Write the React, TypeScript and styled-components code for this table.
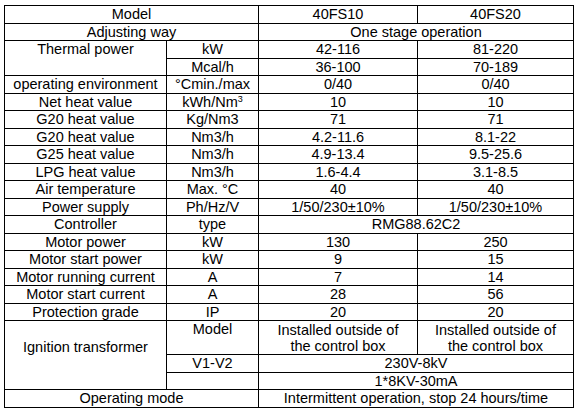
import React from "react";
import styled, { createGlobalStyle } from "styled-components";

const GlobalStyle = createGlobalStyle`
  html, body {
    margin: 0;
    padding: 0;
    background: #ffffff;
  }
`;

const Page = styled.div`
  padding: 5px 0 0 4px;
  background: #ffffff;
`;

const SpecTable = styled.table`
  border-collapse: collapse;
  table-layout: fixed;
  width: 569px;
  font-family: "Liberation Sans", Arial, sans-serif;
  font-size: 14.5px;
  color: #000;
`;

const Col = styled.col<{ $w: number }>`
  width: ${(p) => p.$w}px;
`;

const TableRow = styled.tr<{ $tall?: boolean }>`
  height: ${(p) => (p.$tall ? "34px" : "17.5px")};
`;

const Cell = styled.td<{ $top?: boolean; $lift?: boolean }>`
  border: 1px solid #000;
  padding: 0 0 ${(p) => (p.$lift ? "16px" : "0")};
  text-align: center;
  vertical-align: ${(p) => (p.$top ? "top" : "middle")};
  line-height: 16px;
  white-space: nowrap;
`;

const Sup = styled.sup`
  font-size: 9px;
  line-height: 0;
  vertical-align: 5px;
`;

type CellData = {
  text?: React.ReactNode;
  colSpan?: number;
  rowSpan?: number;
  top?: boolean;
  lift?: boolean;
};
type Row = { cells: CellData[]; tall?: boolean };

const colWidths = [162, 92, 159, 156];

const rows: Row[] = [
  { cells: [{ text: "Model", colSpan: 2 }, { text: "40FS10" }, { text: "40FS20" }] },
  { cells: [{ text: "Adjusting way", colSpan: 2 }, { text: "One stage operation", colSpan: 2 }] },
  { cells: [{ text: "Thermal power", rowSpan: 2, top: true }, { text: "kW" }, { text: "42-116" }, { text: "81-220" }] },
  { cells: [{ text: "Mcal/h" }, { text: "36-100" }, { text: "70-189" }] },
  { cells: [{ text: "operating environment" }, { text: "°Cmin./max" }, { text: "0/40" }, { text: "0/40" }] },
  {
    cells: [
      { text: "Net heat value" },
      { text: <>kWh/Nm<Sup>3</Sup></> },
      { text: "10" },
      { text: "10" },
    ],
  },
  { cells: [{ text: "G20 heat value" }, { text: "Kg/Nm3" }, { text: "71" }, { text: "71" }] },
  { cells: [{ text: "G20 heat value" }, { text: "Nm3/h" }, { text: "4.2-11.6" }, { text: "8.1-22" }] },
  { cells: [{ text: "G25 heat value" }, { text: "Nm3/h" }, { text: "4.9-13.4" }, { text: "9.5-25.6" }] },
  { cells: [{ text: "LPG heat value" }, { text: "Nm3/h" }, { text: "1.6-4.4" }, { text: "3.1-8.5" }] },
  { cells: [{ text: "Air temperature" }, { text: "Max. °C" }, { text: "40" }, { text: "40" }] },
  { cells: [{ text: "Power supply" }, { text: "Ph/Hz/V" }, { text: "1/50/230±10%" }, { text: "1/50/230±10%" }] },
  { cells: [{ text: "Controller" }, { text: "type" }, { text: "RMG88.62C2", colSpan: 2 }] },
  { cells: [{ text: "Motor power" }, { text: "kW" }, { text: "130" }, { text: "250" }] },
  { cells: [{ text: "Motor start power" }, { text: "kW" }, { text: "9" }, { text: "15" }] },
  { cells: [{ text: "Motor running current" }, { text: "A" }, { text: "7" }, { text: "14" }] },
  { cells: [{ text: "Motor start current" }, { text: "A" }, { text: "28" }, { text: "56" }] },
  { cells: [{ text: "Protection grade" }, { text: "IP" }, { text: "20" }, { text: "20" }] },
  {
    tall: true,
    cells: [
      { text: "Ignition transformer", rowSpan: 3, lift: true },
      { text: "Model", top: true },
      { text: <>Installed outside of<br />the control box</> },
      { text: <>Installed outside of<br />the control box</> },
    ],
  },
  { cells: [{ text: "V1-V2" }, { text: "230V-8kV", colSpan: 2 }] },
  { cells: [{ text: "" }, { text: "1*8KV-30mA", colSpan: 2 }] },
  { cells: [{ text: "Operating mode", colSpan: 2 }, { text: "Intermittent operation, stop 24 hours/time", colSpan: 2 }] },
];

export default function App() {
  return (
    <>
      <GlobalStyle />
      <Page>
        <SpecTable>
          <colgroup>
            {colWidths.map((w, i) => (
              <Col key={i} $w={w} />
            ))}
          </colgroup>
          <tbody>
            {rows.map((r, i) => (
              <TableRow key={i} $tall={r.tall}>
                {r.cells.map((c, j) => (
                  <Cell key={j} colSpan={c.colSpan} rowSpan={c.rowSpan} $top={c.top} $lift={c.lift}>
                    {c.text}
                  </Cell>
                ))}
              </TableRow>
            ))}
          </tbody>
        </SpecTable>
      </Page>
    </>
  );
}
